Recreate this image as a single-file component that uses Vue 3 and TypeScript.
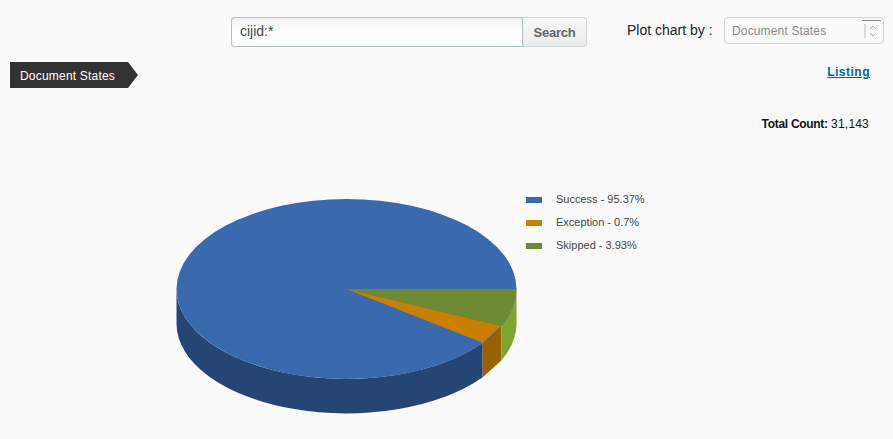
<script setup lang="ts">
const legend = [
  { label: 'Success - 95.37%', color: '#386aad' },
  { label: 'Exception - 0.7%', color: '#c98000' },
  { label: 'Skipped - 3.93%', color: '#6e8a33' },
]
</script>

<template>
  <div class="page">
    <header class="toolbar">
      <form class="search" @submit.prevent>
        <input class="search-input" value="cijid:*" />
        <button class="search-btn" type="button">Search</button>
      </form>
      <span class="plot-label">Plot chart by :</span>
      <div class="select">
        <span>Document States</span>
        <svg class="select-arrow" width="21" height="22" viewBox="0 0 21 22">
          <path d="M1 1.5H20" stroke="#8a8a8a" stroke-width="1" fill="none" />
          <path d="M4 5V19" stroke="#dcdcdc" stroke-width="2" fill="none" />
          <path d="M9 10l3-3 3 3M9 14l3 3 3-3" stroke="#a8a8a8" stroke-width="1" fill="none" />
        </svg>
      </div>
    </header>

    <div class="subbar">
      <div class="tag">Document States</div>
      <a class="listing" href="#" @click.prevent>Listing</a>
    </div>

    <div class="total"><b class="total-key">Total Count:</b> <span class="total-value">31,143</span></div>

    <section class="chart">
      <svg class="pie" width="350" height="230" viewBox="170 190 350 230">
        <path d="M176.5 289V323.5A170 90 0 0 0 482.7 377.3V342.8A170 90 0 0 1 176.5 289Z" fill="#254674" />
        <path d="M482.7 342.8L501.3 326V360.5L482.7 377.3Z" fill="#996100" />
        <path d="M501.3 326A170 90 0 0 0 516.5 289V323.5A170 90 0 0 1 501.3 360.5Z" fill="#7ea52f" />
        <ellipse cx="346.5" cy="289" rx="170" ry="90" fill="#386aad" />
        <path d="M346.5 289L516.5 289A170 90 0 0 1 501.3 326Z" fill="#6e8a33" />
        <path d="M346.5 289L501.3 326L482.7 342.8Z" fill="#c98000" />
      </svg>
      <ul class="legend">
        <li v-for="item in legend" :key="item.label" class="legend-row">
          <i class="swatch" :style="{ background: item.color }"></i>
          <span>{{ item.label }}</span>
        </li>
      </ul>
    </section>
  </div>
</template>

<style>
html, body { margin: 0; background: #fafafa; }
</style>

<style scoped>
.page {
  width: 893px;
  height: 439px;
  overflow: hidden;
  background: #fafafa;
  font-family: "Liberation Sans", Arial, sans-serif;
  color: #222;
}
.toolbar {
  display: flex;
  align-items: flex-start;
  padding: 17px 0 0 231px;
}
.search {
  display: flex;
  width: 356px;
  height: 30px;
  margin: 0;
  box-sizing: border-box;
}
.search-input {
  flex: 1;
  min-width: 0;
  box-sizing: border-box;
  height: 30px;
  padding: 0 8px 2px;
  border: 1px solid #adc0c2;
  border-right: 0;
  border-radius: 4px 0 0 4px;
  background: linear-gradient(#f1f1f1, #fff 55%);
  font: 14px "Liberation Sans", Arial, sans-serif;
  color: #444;
  outline: none;
}
.search-btn {
  width: 65px;
  height: 30px;
  box-sizing: border-box;
  padding: 0;
  border: 1px solid #cfd6d6;
  border-left: 1px solid #adc0c2;
  border-radius: 0 4px 4px 0;
  background: linear-gradient(#f8f8f8, #ececec);
  font: bold 13px "Liberation Sans", Arial, sans-serif;
  letter-spacing: -0.2px;
  color: #666;
}
.plot-label {
  margin-left: 40px;
  width: 97px;
  font-size: 14px;
  line-height: 26px;
  color: #222;
}
.select {
  position: relative;
  display: flex;
  align-items: center;
  box-sizing: border-box;
  width: 160px;
  height: 27px;
  padding-left: 7px;
  border: 1px solid #d4d4d4;
  border-radius: 4px;
  background: #fafafa;
  font-size: 12px;
  letter-spacing: 0.15px;
  color: #888;
}
.select-arrow {
  position: absolute;
  right: 1px;
  top: 1px;
}
.subbar {
  display: flex;
  justify-content: space-between;
  align-items: flex-start;
  margin-top: 15px;
  padding: 0 23px 0 10px;
}
.tag {
  position: relative;
  box-sizing: border-box;
  width: 118px;
  height: 26px;
  padding-left: 10px;
  background: #333;
  color: #fff;
  font-size: 12px;
  letter-spacing: 0.2px;
  line-height: 28px;
}
.tag::after {
  content: "";
  position: absolute;
  left: 100%;
  top: 0;
  border-style: solid;
  border-width: 13px 0 13px 10px;
  border-color: transparent transparent transparent #333;
}
.listing {
  margin-top: 3px;
  font-size: 12px;
  font-weight: bold;
  letter-spacing: 0.5px;
  line-height: 14px;
  color: #006699;
}
.total {
  margin-top: 29px;
  padding-right: 24px;
  text-align: right;
  font-size: 12px;
  line-height: 14px;
  color: #111;
}
.total-key {
  letter-spacing: -0.3px;
}
.total-value {
  letter-spacing: 0.2px;
}
.chart {
  display: flex;
  align-items: flex-start;
  margin-top: 59px;
  padding-left: 170px;
}
.pie {
  display: block;
  flex: none;
}
.legend {
  list-style: none;
  margin: 3px 0 0 6px;
  padding: 0;
  display: flex;
  flex-direction: column;
  gap: 10px;
  font-size: 11px;
  line-height: 13px;
  color: #444;
}
.legend-row {
  display: flex;
  align-items: center;
  gap: 14px;
}
.swatch {
  width: 16px;
  height: 6px;
  flex: none;
}
</style>
